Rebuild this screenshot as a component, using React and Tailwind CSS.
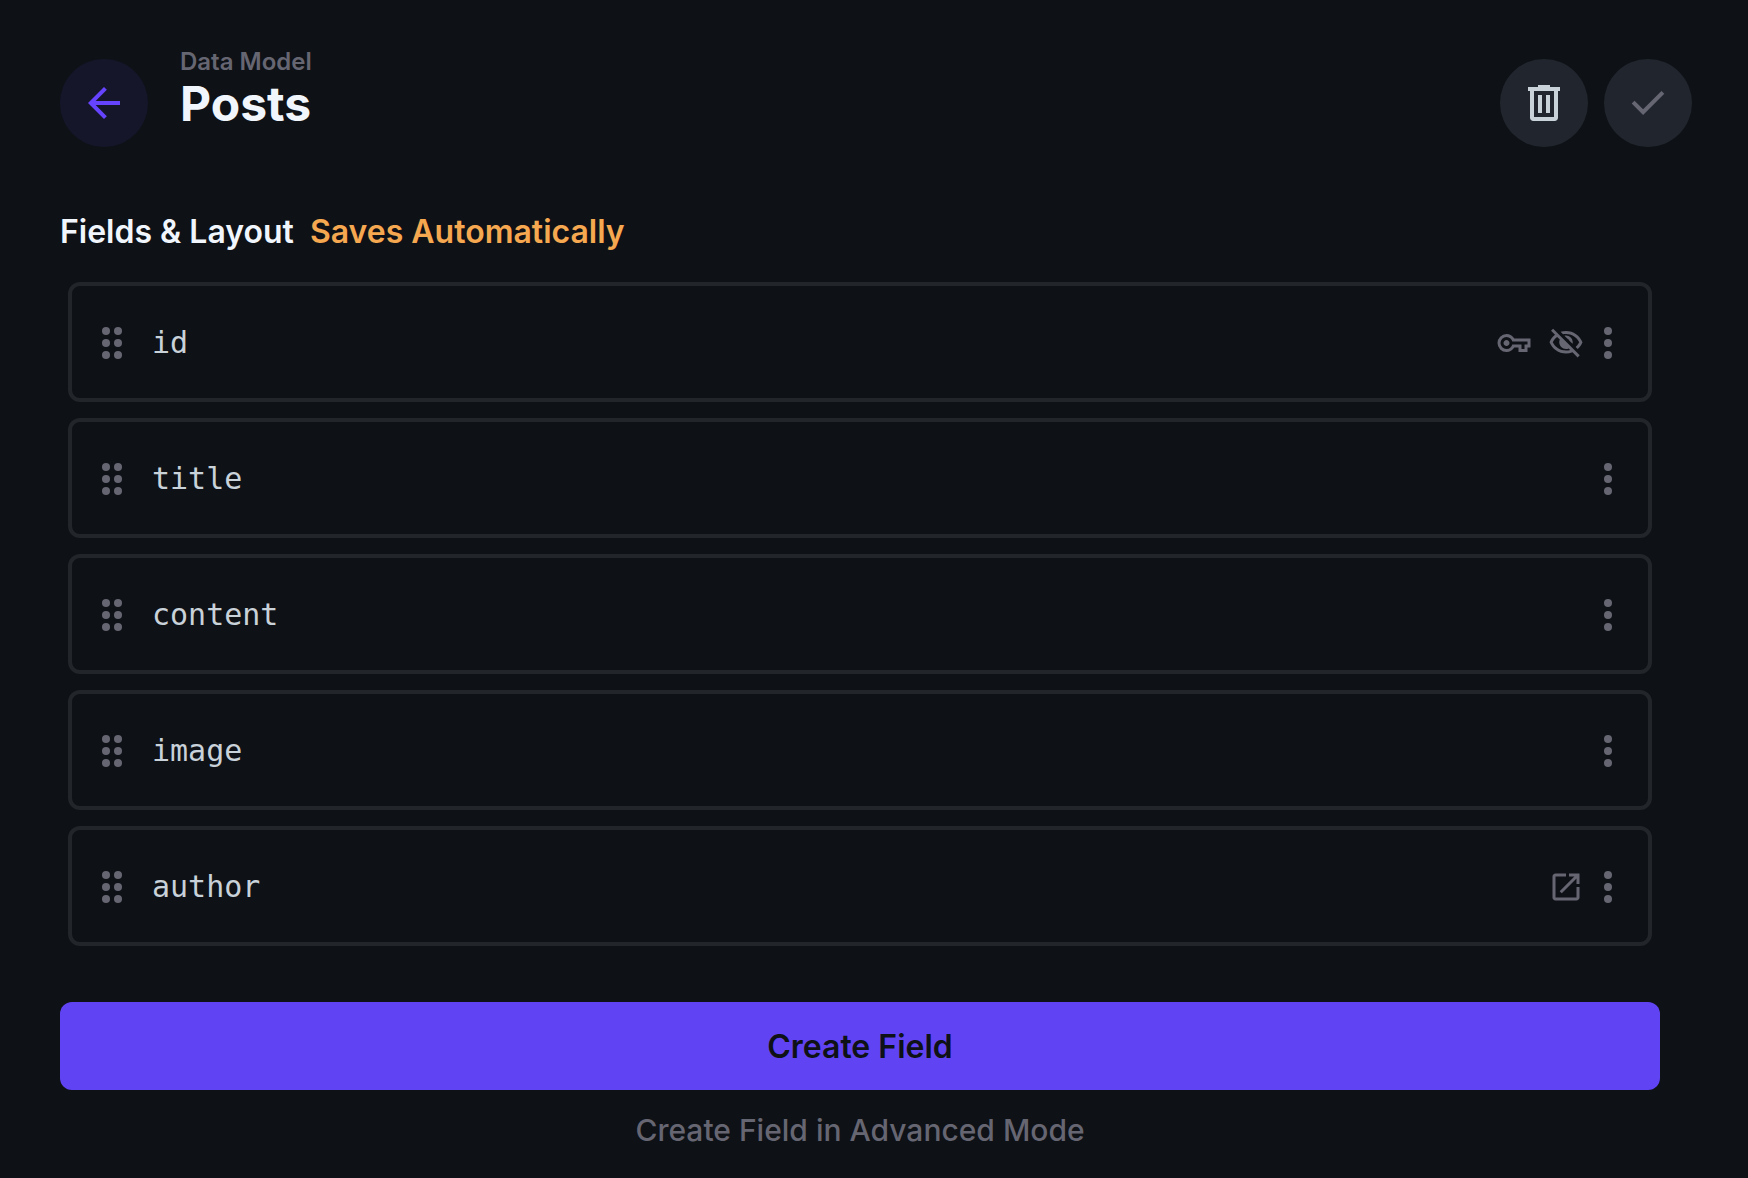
import React from "react";

function Icon({ d, className }) {
  return (
    <svg viewBox="0 0 24 24" fill="currentColor" aria-hidden="true" className={className}>
      <path d={d} />
    </svg>
  );
}

const ICONS = {
  back: "M20 11H7.83l5.59-5.59L12 4l-8 8 8 8 1.41-1.41L7.83 13H20z",
  trash:
    "M6.600 21q-.65 0-1.125-.475T5 19.400V6H4V4h5V3h6v1h5v2h-1v13.400q0 .650-.475 1.125T17.400 21zM17 6H7v13h10zM9 17h2V8H9zm4 0h2V8h-2z",
  check: "m9.55 18-5.7-5.7 1.425-1.425L9.55 15.15l9.175-9.175L20.15 7.4z",
  key: "M7 14q-.825 0-1.412-.587T5 12t.588-1.412T7 10t1.413.588T9 12t-.587 1.413T7 14m0 4q-2.5 0-4.250-1.750T1 12t1.750-4.250T7 6q1.675 0 3.038.825T12.200 9H23v6h-2v3h-6v-3h-2.800q-.8 1.350-2.162 2.175T7 18m0-2q1.650 0 2.650-1.012T10.850 13H17v3h2v-3h2v-2H10.850q-.2-.975-1.200-1.987T7 8 4.175 9.175 3 12t1.175 2.825T7 16",
  eyeOff:
    "M12 6c3.79 0 7.17 2.13 8.82 5.5-.59 1.22-1.42 2.27-2.41 3.12l1.41 1.41c1.39-1.23 2.49-2.77 3.18-4.53C21.27 7.11 17 4 12 4c-1.27 0-2.49.2-3.64.57l1.65 1.65C10.66 6.09 11.32 6 12 6zm-1.07 1.14L13 9.21c.57.25 1.03.71 1.28 1.28l2.07 2.07c.08-.34.14-.7.14-1.07C16.5 9.01 14.48 7 12 7c-.37 0-.72.05-1.07.14zM2.01 3.87l2.68 2.68C3.06 7.83 1.77 9.53 1 11.5 2.73 15.89 7 19 12 19c1.52 0 2.98-.29 4.32-.82l3.42 3.42 1.41-1.41L3.42 2.45 2.01 3.87zM6.11 7.97l1.75 1.75c-.23.55-.36 1.15-.36 1.78 0 2.48 2.02 4.5 4.5 4.5.63 0 1.23-.13 1.77-.36l.98.98c-.88.24-1.8.38-2.75.38-3.79 0-7.17-2.13-8.82-5.5.7-1.43 1.72-2.61 2.93-3.53z",
  external:
    "M19 19H5V5h7V3H5c-1.110 0-2 .9-2 2v14c0 1.100.890 2 2 2h14c1.100 0 2-.9 2-2v-7h-2v7zM14 3v2h3.590l-9.830 9.830 1.410 1.410L19 6.410V10h2V3h-7z",
};

const FIELDS = [
  { name: "id", icons: ["key", "eyeOff"] },
  { name: "title", icons: [] },
  { name: "content", icons: [] },
  { name: "image", icons: [] },
  { name: "author", icons: ["external"] },
];

function DragHandle() {
  return (
    <svg viewBox="0 0 36 36" fill="currentColor" aria-hidden="true" className="size-9">
      {[6, 18, 30].map((y) => (
        <g key={y}>
          <circle cx="12" cy={y} r="4" />
          <circle cx="24" cy={y} r="4" />
        </g>
      ))}
    </svg>
  );
}

function MoreIcon() {
  return (
    <svg viewBox="0 0 36 36" fill="currentColor" aria-hidden="true" className="size-9">
      <circle cx="18" cy="6" r="4" />
      <circle cx="18" cy="18" r="4" />
      <circle cx="18" cy="30" r="4" />
    </svg>
  );
}

function FieldRow({ field }) {
  return (
    <li className="flex h-[120px] items-center rounded-xl border-4 border-[#22262b] px-[22px] pt-0.5 text-[#666672]">
      <button type="button" aria-label={"Reorder " + field.name} className="shrink-0">
        <DragHandle />
      </button>
      <span className="ml-[22px] grow font-['DejaVu_Sans_Mono',monospace] text-[30px] leading-10 text-[#c9d1d9]">
        {field.name}
      </span>
      <div className="flex shrink-0 items-center">
        <div className="mr-1.5 flex gap-4">
          {field.icons.map((name) => (
            <Icon key={name} d={ICONS[name]} className="size-9" />
          ))}
        </div>
        <button type="button" aria-label={"Options for " + field.name}>
          <MoreIcon />
        </button>
      </div>
    </li>
  );
}

export default function App() {
  return (
    <div className="min-h-screen bg-[#0e1116] pt-[46px] pr-14 pb-6 pl-[60px] font-['Inter',sans-serif]">
      <header className="flex items-start">
        <a
          href="#data-model"
          aria-label="Back"
          className="mt-[13px] flex size-[88px] shrink-0 items-center justify-center rounded-full bg-[#16162b] text-[#6644ff]"
        >
          <Icon d={ICONS.back} className="size-12" />
        </a>
        <div className="ml-8 grow">
          <p className="text-2xl font-semibold leading-8 text-[#666672]">Data Model</p>
          <h1 className="text-5xl font-bold leading-[52px] text-[#f0f6fc]">Posts</h1>
        </div>
        <div className="mt-[13px] flex shrink-0 gap-4">
          <button
            type="button"
            aria-label="Delete collection"
            className="flex size-[88px] items-center justify-center rounded-full bg-[#21262e] text-[#c9d1d9]"
          >
            <Icon d={ICONS.trash} className="size-12" />
          </button>
          <button
            type="button"
            aria-label="Save"
            className="flex size-[88px] items-center justify-center rounded-full bg-[#21262e] text-[#666672]"
          >
            <Icon d={ICONS.check} className="size-12" />
          </button>
        </div>
      </header>

      <main className="mt-[65px] mr-8">
        <h2 className="flex gap-4 text-[32px] font-semibold leading-10 text-[#f0f6fc]">
          Fields &amp; Layout <span className="text-[#f5a850]">Saves Automatically</span>
        </h2>
        <ul className="mt-[30px] flex flex-col gap-4 px-2">
          {FIELDS.map((field) => (
            <FieldRow key={field.name} field={field} />
          ))}
        </ul>
        <button
          type="button"
          className="mt-14 flex h-[88px] w-full items-center justify-center rounded-xl bg-[#6044f4] pt-0.5 text-[32px] font-semibold text-[#0e1116]"
        >
          Create Field
        </button>
        <button
          type="button"
          className="mx-auto mt-5 block text-[30px] font-medium leading-10 text-[#666672]"
        >
          Create Field in Advanced Mode
        </button>
      </main>
    </div>
  );
}
